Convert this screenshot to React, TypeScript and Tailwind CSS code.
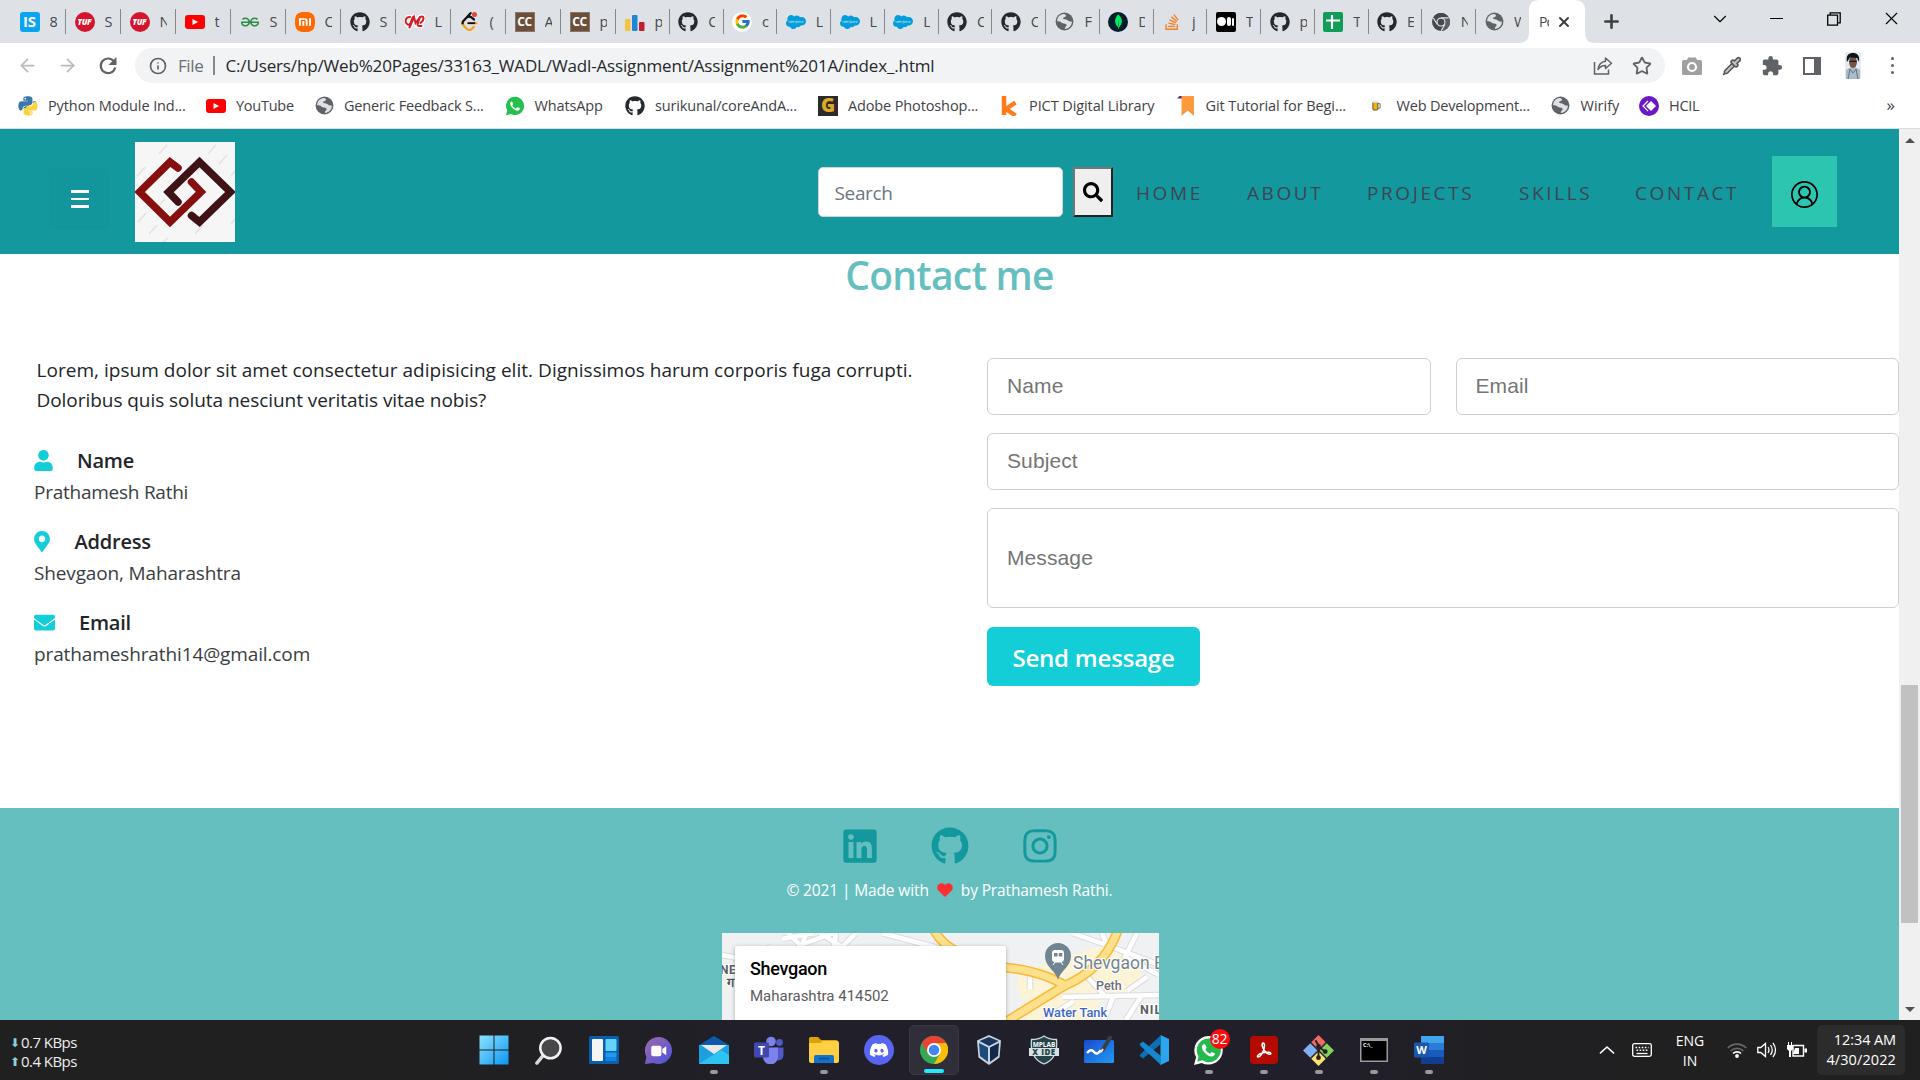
import type { ReactNode } from 'react';
import {
  FaDiscord,
  FaEnvelope,
  FaGithub,
  FaInstagram,
  FaLinkedin,
  FaMapMarkerAlt,
  FaPython,
  FaSalesforce,
  FaSearch,
  FaStackOverflow,
  FaUser,
} from 'react-icons/fa';
import { FcGoogle } from 'react-icons/fc';
import { MdExtension } from 'react-icons/md';
import { SiGeeksforgeeks, SiLeetcode, SiMongodb, SiXiaomi } from 'react-icons/si';
import { VscAccount } from 'react-icons/vsc';
import { ArrowLeft, ArrowRight, ChevronDown, ChevronUp, Info, Pipette, Plus, Star, X } from 'lucide-react';

/* ---------- small brand marks ---------- */

const Globe = () => (
  <svg viewBox="0 0 20 20" className="size-[19px]">
    <circle cx="10" cy="10" r="9.4" fill="#5f6368" />
    <path d="M9 2.2c2 .2 3 .9 2.400 2.200-.6 1.200-2.400.8-2.900 2-.4 1.200 1.600 1.400 3.200 1.600 1.800.3 2.100 1.900 3.700 2 1.300 0 2.300-.3 2.400.6-.2 3.900-3.500 7.200-7.300 7.200-.3-1.500.2-2.100 1.300-2.900 1-.8.400-2.200-1-2.500-1.900-.3-3.200-.2-4.400-1.500C5.200 9.700 3.400 9.600 2.200 9.800 2.300 5.700 5.200 2.500 9 2.200z" fill="#dfe1e5" />
  </svg>
);

const YouTube = () => (
  <span className="flex h-[14px] w-[20px] items-center justify-center rounded-[3px] bg-[#ff0000]">
    <svg viewBox="0 0 6 6" className="size-[6px]"><path d="M0.500 0l5.500 3-5.500 3z" fill="#fff" /></svg>
  </span>
);

const Tuf = () => (
  <span className="flex size-5 items-center justify-center rounded-full bg-[#d5152d] text-[8px] font-black italic leading-none tracking-[-0.2px] text-white">TUF</span>
);

const CodeChef = () => (
  <span className="flex size-5 items-center justify-center border border-[#8b7564] bg-[#6b4f3a] text-[12px] font-bold leading-none tracking-[-0.3px] text-white">CC</span>
);

const Bars = () => (
  <svg viewBox="0 0 20 20" className="size-5">
    <rect x="0" y="7" width="5.500" height="12" rx="1" fill="#f5c342" />
    <rect x="7" y="3" width="5.500" height="16" rx="1" fill="#1e88d2" />
    <rect x="14" y="10" width="5.500" height="9" rx="1" fill="#c01f2e" />
  </svg>
);

const Octocat = () => <FaGithub className="size-[20px] text-[#24292e]" />;
const Cloud = () => <FaSalesforce className="size-[20px] text-[#009edb]" />;

const WhatsApp = ({ className }: { className: string }) => (
  <svg viewBox="0 0 24 24" className={className}>
    <path d="M12.200 1A10.900 10.900 0 0 0 2.800 17.500L1 23.200l6-1.600A10.900 10.900 0 1 0 12.200 1z" fill="#25c04d" />
    <path d="M8.300 6.500c-.4-.1-1 .1-1.400.7-1.200 1.500-.8 3.500.6 5.400 2 2.900 4.600 4.600 7.200 5 1.500.1 2.700-.7 3-1.900.2-.7 0-1-.3-1.200l-2.200-1c-.4-.2-.7-.1-.9.200l-.9 1.100c-.2.3-.5.300-.8.100-1.600-.7-2.800-1.800-3.700-3.300-.2-.3 0-.5.200-.8l.6-.8c.1-.2.100-.5 0-.7l-.9-2.200c-.1-.4-.3-.6-.5-.6z" fill="#fff" />
  </svg>
);

const Chrome = ({ mono = false, className }: { mono?: boolean; className: string }) => (
  <svg viewBox="0 0 24 24" className={className}>
    <circle cx="12" cy="12" r="12" fill={mono ? '#45494e' : '#34a853'} />
    <path d="M1.600 6A12 12 0 0 1 22.400 6L12 6.300 6.800 15z" fill={mono ? '#45494e' : '#ea4335'} />
    <path d="M22.400 6A12 12 0 0 1 12 24l5.200-9L12 6.300z" fill={mono ? '#5b6066' : '#fbbc05'} />
    {mono && <path d="M12 6.400H22M6.900 15L1.800 6.600M17.200 15l-5 8.700" stroke="#dee1e6" strokeWidth="1.600" />}
    <circle cx="12" cy="12" r="6" fill={mono ? '#dee1e6' : '#fff'} />
    <circle cx="12" cy="12" r="4.500" fill={mono ? '#45494e' : '#4285f4'} />
  </svg>
);

/* ---------- tab strip ---------- */

type Tab = { icon: ReactNode; letter: string };

const wideTabs: Tab[] = [
  { icon: <span className="flex size-5 items-center justify-center rounded-[3px] bg-[#0aa5f0] text-[15px] font-bold leading-none text-white">IS</span>, letter: '8' },
  { icon: <Tuf />, letter: 'S' },
  { icon: <Tuf />, letter: 'N' },
  { icon: <YouTube />, letter: 't' },
  { icon: <SiGeeksforgeeks className="size-[18px] text-[#2f8d46]" />, letter: 'S' },
  { icon: <span className="flex size-5 items-center justify-center rounded-[6px] bg-white"><SiXiaomi className="size-5 text-[#ff6900]" /></span>, letter: 'C' },
  { icon: <Octocat />, letter: 'S' },
  {
    icon: (
      <svg viewBox="0 0 20 16" className="h-[16px] w-5">
        <path d="M5 3a4 4 0 0 0-3 7q2 2 3.500-1L8 3M4.500 13.500L9 3l1.500 6L15 3l-2.500 7.500q0 2 4 1.500M15 3q3-1.500 3.500 1 0 3-3 5" fill="none" stroke="#fff" strokeWidth="4.500" strokeLinecap="round" />
        <path d="M5 3a4 4 0 0 0-3 7q2 2 3.500-1L8 3M4.500 13.500L9 3l1.500 6L15 3l-2.500 7.500q0 2 4 1.500M15 3q3-1.500 3.500 1 0 3-3 5" fill="none" stroke="#d01f26" strokeWidth="2" strokeLinecap="round" />
      </svg>
    ),
    letter: 'L',
  },
  {
    icon: (
      <span className="relative flex size-5 items-center justify-center">
        <SiLeetcode className="size-[19px] text-[#f89f1b] [clip-path:inset(50%_0_0_0)]" />
        <SiLeetcode className="absolute size-[19px] text-[#111111] [clip-path:inset(0_20%_35%_0)]" />
        <i className="absolute right-[3px] top-0 size-[5px] rounded-full bg-[#e0453a]" />
      </span>
    ),
    letter: '(',
  },
  { icon: <CodeChef />, letter: 'A' },
  { icon: <CodeChef />, letter: 'p' },
];

const narrowTabs: Tab[] = [
  { icon: <Bars />, letter: 'p' },
  { icon: <Octocat />, letter: 'C' },
  { icon: <span className="flex size-5 items-center justify-center rounded-full bg-white"><FcGoogle className="size-[17px]" /></span>, letter: 'c' },
  { icon: <Cloud />, letter: 'L' },
  { icon: <Cloud />, letter: 'L' },
  { icon: <Cloud />, letter: 'L' },
  { icon: <Octocat />, letter: 'C' },
  { icon: <Octocat />, letter: 'C' },
  { icon: <Globe />, letter: 'F' },
  { icon: <span className="flex size-5 items-center justify-center rounded-full bg-[#001e2b]"><SiMongodb className="size-[15px] text-[#00ed64]" /></span>, letter: 'D' },
  { icon: <FaStackOverflow className="size-[18px] text-[#f48024]" />, letter: 'j' },
  {
    icon: (
      <span className="flex size-5 items-center justify-center gap-px rounded-[2px] bg-black">
        <i className="size-[9px] rounded-full bg-white" />
        <i className="h-[9px] w-[4px] rounded-full bg-white" />
        <i className="h-[8px] w-[2px] rounded-full bg-white" />
      </span>
    ),
    letter: 'T',
  },
  { icon: <Octocat />, letter: 'p' },
  { icon: <span className="flex size-5 items-center justify-center rounded-[2px] bg-[#0f9d58]"><svg viewBox="0 0 14 14" className="size-[14px]"><path d="M6 0v14M0 5.500h14" stroke="#fff" strokeWidth="2.200" /></svg></span>, letter: 'T' },
  { icon: <Octocat />, letter: 'E' },
  { icon: <Chrome mono className="size-[18px]" />, letter: 'N' },
];

const TabItem = ({ icon, letter, wide }: Tab & { wide?: boolean }) => (
  <div className={`relative flex h-full shrink-0 items-center pl-[8.500px] ${wide ? 'w-[55px]' : 'w-[53.750px]'}`}>
    <span className="flex size-5 shrink-0 items-center justify-center">{icon}</span>
    <span className="ml-[10px] w-[7px] overflow-hidden text-[14.500px] leading-5 tracking-[-0.5px] text-[#45494e]">{letter}</span>
    <i className="absolute right-0 top-[9px] h-[25px] w-px bg-[#85888d]" />
  </div>
);

const TabStrip = () => (
  <div className="flex h-[43px] shrink-0 bg-[#dee1e6] pl-[11px]">
    {wideTabs.map((t, i) => <TabItem key={i} {...t} wide />)}
    {narrowTabs.map((t, i) => <TabItem key={i} {...t} />)}
    <div className="flex h-full w-[52px] items-center pl-[9px]">
      <Globe />
      <span className="ml-[10px] w-[7px] overflow-hidden text-[14.500px] leading-5 text-[#45494e]">W</span>
    </div>
    <div className="relative flex h-full w-[56px] items-center pl-[11px]">
      <svg viewBox="0 0 76 43" className="absolute -left-[9px] top-0 h-[43px] w-[76px]">
        <path d="M0 43Q10 43 10 33V10Q10 0 20 0H56Q66 0 66 10V33Q66 43 76 43z" fill="#fff" />
      </svg>
      <span className="relative w-[10px] overflow-hidden text-[14px] leading-5 tracking-[-1px] text-[#45494e]">Po</span>
      <X className="relative ml-[7px] size-4 text-[#3c4043]" strokeWidth={3} />
    </div>
    <div className="flex h-full w-[54px] items-center justify-center">
      <Plus className="size-[21px] text-[#3c4043]" strokeWidth={3} />
    </div>
    <div className="ml-auto flex h-[37px] items-center text-black">
      <span className="flex w-[57px] justify-center"><ChevronDown className="size-[22px]" strokeWidth={1.200} /></span>
      <span className="flex w-[57px] justify-center"><i className="h-[1.500px] w-[13px] bg-black" /></span>
      <span className="flex w-[57px] justify-center">
        <svg viewBox="0 0 14 14" className="size-[14px]" fill="none" stroke="#000" strokeWidth="1.300"><path d="M.7 3.200h9.800v10H.7zM3.200 3V.8h10v10h-2.500" /></svg>
      </span>
      <span className="flex w-[58px] justify-center"><X className="size-[21px]" strokeWidth={1.300} /></span>
    </div>
  </div>
);

/* ---------- address bar ---------- */

const AddressBar = () => (
  <div className="flex h-[45px] shrink-0 items-center bg-white">
    <div className="flex w-[135px] shrink-0 items-center pl-[17px]">
      <ArrowLeft className="size-[21px] text-[#bababa]" strokeWidth={2} />
      <ArrowRight className="ml-[19px] size-[21px] text-[#bababa]" strokeWidth={2} />
      <svg viewBox="0 0 20 20" className="ml-[20px] size-[20px]">
        <path d="M16 5.500A7.300 7.300 0 1 0 17.200 11.500" fill="none" stroke="#5f6368" strokeWidth="2.200" />
        <path d="M18.500 1v8h-8z" fill="#5f6368" />
      </svg>
    </div>
    <div className="flex h-[35px] w-[1530px] shrink-0 items-center rounded-full bg-[#f1f3f4] pl-[14px]">
      <Info className="size-[18px] text-[#5f6368]" strokeWidth={2.200} />
      <span className="ml-[11px] w-[35px] text-[17px] tracking-[-0.400px] text-[#6a6e73]">File</span>
      <i className="h-[19px] w-[1.500px] bg-[#85888d]" />
      <span className="ml-[11px] whitespace-nowrap text-[17px] tracking-[-0.150px] text-[#25282c]">
        C:/Users/hp/Web%20Pages/33163_WADL/Wadl-Assignment/Assignment%201A/index_.html
      </span>
      <span className="ml-auto flex w-[72px] items-center gap-[19px]">
        <svg viewBox="0 0 20 20" className="size-[20px] shrink-0" fill="none" stroke="#5f6368" strokeWidth="1.500">
          <path d="M1.500 6v12h14v-4.500" />
          <path d="M12.500 2l6 5.200-6 5.300V9.400C9 9.300 7 10.500 5 13.500 5.500 9 8 5.800 12.500 5.200z" strokeLinejoin="round" />
        </svg>
        <Star className="size-[20px] shrink-0 text-[#5f6368]" strokeWidth={2.200} />
      </span>
    </div>
    <div className="flex shrink-0 items-center pl-[7px]">
      <span className="flex w-[40px] justify-center">
        <svg viewBox="0 0 20 18" className="h-[18px] w-5">
          <path d="M1.500 3H5l1-2.500h8L15 3h3.500Q20 3 20 4.500v12q0 1.500-1.500 1.500h-17Q0 18 0 16.500v-12Q0 3 1.500 3z" fill="#a0a0a0" />
          <circle cx="10" cy="10" r="4" fill="none" stroke="#fff" strokeWidth="2.200" />
        </svg>
      </span>
      <span className="flex w-[40px] justify-center"><Pipette className="size-[20px] fill-[#c5c5c5] text-[#55585c]" strokeWidth={2} /></span>
      <span className="flex w-[40px] justify-center"><MdExtension className="size-[22px] text-[#5f6368]" /></span>
      <span className="flex w-[40px] justify-center">
        <i className="flex h-[18px] w-[18px] justify-end border-2 border-[#5f6368]"><i className="h-full w-[5px] bg-[#5f6368]" /></i>
      </span>
      <span className="flex w-[41px] justify-center">
        <svg viewBox="0 0 16 27" className="h-[27px] w-[16px]">
          <rect width="16" height="27" rx="2" fill="#e4ecf0" />
          <path d="M1 27V18l5-3h4l5 3v9z" fill="#a9bbc6" />
          <path d="M3 27l2-10 3 4 3-4 2 10" fill="none" stroke="#5f7483" />
          <ellipse cx="8" cy="10" rx="4" ry="6" fill="#7a5244" />
          <path d="M2 10C.5 3 4 1 8 1s7 2 6 9l-2-4-7-.5z" fill="#0c1522" />
          <path d="M4.500 9.300h7" stroke="#0c1522" strokeWidth="1.200" />
        </svg>
      </span>
      <span className="flex w-[39px] flex-col items-center gap-[3.500px]">
        <i className="size-[3.500px] rounded-full bg-[#5f6368]" />
        <i className="size-[3.500px] rounded-full bg-[#5f6368]" />
        <i className="size-[3.500px] rounded-full bg-[#5f6368]" />
      </span>
    </div>
  </div>
);

/* ---------- bookmarks ---------- */

const bookmarks = [
  {
    icon: (
      <>
        <svg className="absolute size-0"><linearGradient id="py" x1="0.200" y1="0" x2="0.800" y2="1"><stop offset="0.500" stopColor="#3a76a8" /><stop offset="0.500" stopColor="#fbd341" /></linearGradient></svg>
        <FaPython className="size-[22px] fill-[url(#py)]" />
      </>
    ),
    label: 'Python Module Ind...', box: 'w-[188px] tracking-[-0.100px]',
  },
  { icon: <YouTube />, label: 'YouTube', box: 'w-[108px] tracking-[-0.250px]' },
  { icon: <Globe />, label: 'Generic Feedback S...', box: 'w-[190.500px] tracking-[-0.170px]' },
  { icon: <WhatsApp className="size-[20px]" />, label: 'WhatsApp', box: 'w-[120.500px] tracking-[-0.150px]' },
  { icon: <Octocat />, label: 'surikunal/coreAndA...', box: 'w-[193px] tracking-[-0.150px]' },
  { icon: <span className="flex size-5 items-center justify-center bg-[#2b2b2b] text-[19px] font-extrabold leading-none text-[#e0a825]">G</span>, label: 'Adobe Photoshop...', box: 'w-[181px] tracking-[-0.130px]' },
  { icon: <svg viewBox="0 0 16 20" className="h-5 w-4"><path d="M3 0v19M14.500 6.500L5 13l9.500 6.500" fill="none" stroke="#ff7a1a" strokeWidth="4.500" /></svg>, label: 'PICT Digital Library', box: 'w-[176.500px] tracking-[-0.090px]' },
  { icon: <svg viewBox="0 0 18 20" className="h-5 w-[18px]"><path d="M0 2.500L2.500 0H6v2.500z" fill="#5c2a6b" /><path d="M4.500 0H17v20l-6.200-5.500L4.500 20z" fill="#fd9a3e" /></svg>, label: 'Git Tutorial for Begi...', box: 'w-[191px] tracking-[-0.090px]' },
  { icon: <svg viewBox="0 0 10 12" className="h-[11px] w-[9px]"><rect x="1" y="2" width="5.500" height="9" rx="1" fill="#f7b500" stroke="#444" /><path d="M6.500 4H9v5H6.500" fill="none" stroke="#666" /><rect x="1" y="0.500" width="6" height="2.500" fill="#e6e6e6" /></svg>, label: 'Web Development...', box: 'w-[184px] tracking-[-0.180px]' },
  { icon: <Globe />, label: 'Wirify', box: 'w-[88.500px]' },
  {
    icon: (
      <svg viewBox="0 0 20 20" className="size-5">
        <circle cx="10" cy="10" r="10" fill="#6c16c7" />
        <path d="M12 5l5 5-5 5-5-5z" fill="#fff" />
        <path d="M9 5l-5 5 5 5" fill="none" stroke="#fff" strokeWidth="1.200" />
      </svg>
    ),
    label: 'HCIL', box: 'w-[80px] tracking-[-0.250px]',
  },
];

const Bookmarks = () => (
  <div className="flex h-[41px] shrink-0 items-center border-b border-[#d9dbdd] bg-white pb-[5px] pl-[18px] text-[14.500px] text-[#3f4246]">
    {bookmarks.map((b, i) => (
      <div key={i} className={`flex shrink-0 items-center gap-[10px] whitespace-nowrap ${b.box}`}>
        <span className="flex size-5 shrink-0 items-center justify-center">{b.icon}</span>
        {b.label}
      </div>
    ))}
    <span className="ml-auto mr-[25px] pb-[3px] text-[17px] leading-none">»</span>
  </div>
);

/* ---------- web page ---------- */

const navLinks = [
  { label: 'HOME', box: 'w-[111px]' },
  { label: 'ABOUT', box: 'w-[120px]' },
  { label: 'PROJECTS', box: 'w-[152px]' },
  { label: 'SKILLS', box: 'w-[116px]' },
  { label: 'CONTACT', box: 'w-[137px]' },
];

const Logo = () => (
  <svg viewBox="0 0 100 100" className="ml-[26px] size-[100px] bg-[#f6f6f6]">
    <path d="M24 12l8-9M73 12l8-9M2 34l8-9M84 22l8-9M3 80l8-9M14 92l8-9M60 92l8-9M22 66l8-9M62 30l8-9M74 66l8-9M28 100l5-4M96 82l4-5M96 34l4-5" stroke="#e2e2e2" strokeWidth="1.500" />
    <g fill="none" strokeWidth="7.500" strokeLinecap="round" strokeLinejoin="miter">
      <path d="M43 26L35 20 4.500 50 35 80 66 50 56.500 40" stroke="#85100f" />
      <path d="M43 60L33.500 50 64.500 20 95.500 50 64.500 80 56.500 73.500" stroke="#3f1315" />
    </g>
  </svg>
);

const NavBar = () => (
  <nav className="flex h-[125px] shrink-0 items-center bg-[#13989e]">
    <div className="ml-[49px] mt-[15px] flex h-[61px] w-[60px] flex-col justify-center gap-[5px] bg-[#12969c] pl-[22px]">
      <i className="h-[2.500px] w-[18px] bg-white" />
      <i className="h-[2.500px] w-[18px] bg-white" />
      <i className="h-[2.500px] w-[18px] bg-white" />
    </div>
    <Logo />
    <div className="ml-[583px] flex h-[50px] w-[245px] items-center rounded-[5px] border border-[#ced4da] bg-white pl-[15.500px] pt-[3px] text-[19px] tracking-[-0.350px] text-[#6c757d]">
      Search
    </div>
    <div className="ml-[10px] flex h-[50px] w-[40px] items-center justify-center border-[2.500px] border-b-[#222222] border-l-[#767676] border-r-[#222222] border-t-[#767676] bg-[#efefef]">
      <FaSearch className="size-[20px] text-black" />
    </div>
    <div className="ml-[23px] flex pt-[3px] text-[19px] tracking-[2.600px] text-[#3f4551]">
      {navLinks.map((l) => <span key={l.label} className={l.box}>{l.label}</span>)}
    </div>
    <div className="flex h-[71px] w-[65px] items-center justify-center bg-[#2bc5b0] pt-[6px]">
      <VscAccount className="size-[27px] text-black" />
    </div>
  </nav>
);

const details = [
  { icon: <FaUser className="h-[21px] w-[19px]" />, title: 'Name', value: 'Prathamesh Rathi', gap: 'gap-[24px]', track: 'tracking-[-0.250px]' },
  { icon: <FaMapMarkerAlt className="h-[21px] w-[16px]" />, title: 'Address', value: 'Shevgaon, Maharashtra', gap: 'gap-[24.500px]', track: 'tracking-[-0.150px]' },
  { icon: <FaEnvelope className="size-[21px]" />, title: 'Email', value: 'prathameshrathi14@gmail.com', gap: 'gap-[24px]', track: 'tracking-[-0.120px]' },
];

const field = "flex items-center rounded-[6px] border border-[#cfcfcf] pl-[19px] font-['Liberation_Sans'] text-[21px] tracking-[0.100px] text-[#757575]";

const Contact = () => (
  <section className="flex h-[554px] shrink-0 flex-col bg-white">
    <h2 className="h-[39px] pt-px text-center text-[39px] font-semibold leading-[39px] tracking-[-0.750px] text-[#66bfbf]">Contact me</h2>
    <div className="flex pt-[62px]">
      <div className="w-[987px] shrink-0 pl-[34px] text-[#212529]">
        <p className="pl-[2.500px] text-[19px] leading-[30px]">
          <span className="block whitespace-nowrap tracking-[0.035px]">Lorem, ipsum dolor sit amet consectetur adipisicing elit. Dignissimos harum corporis fuga corrupti.</span>
          <span className="block tracking-[-0.050px]">Doloribus quis soluta nesciunt veritatis vitae nobis?</span>
        </p>
        <div className="flex flex-col gap-[18px] pt-[30px]">
          {details.map((d) => (
            <div key={d.title}>
              <div className={`flex h-[31px] items-center text-[#13ced6] ${d.gap}`}>
                {d.icon}
                <span className="text-[20px] font-semibold tracking-[-0.200px] text-[#212529]">{d.title}</span>
              </div>
              <div className={`h-8 text-[19px] leading-8 text-[#3a3d40] ${d.track}`}>{d.value}</div>
            </div>
          ))}
        </div>
      </div>
      <form className="flex flex-1 flex-col pt-[3px]">
        <div className="grid grid-cols-2 gap-[25px]">
          <div className={`h-[57px] pb-[2px] ${field}`}>Name</div>
          <div className={`h-[57px] pb-[2px] ${field}`}>Email</div>
        </div>
        <div className={`mt-[18px] h-[57px] pb-[2px] ${field}`}>Subject</div>
        <div className={`mt-[18px] h-[100px] ${field}`}>Message</div>
        <button type="button" className="mt-[19px] flex h-[59px] w-[213px] items-center justify-center whitespace-nowrap rounded-[6px] bg-[#13ced6] pt-[3px] text-[24px] font-semibold tracking-[-0.200px] text-white">
          Send message
        </button>
      </form>
    </div>
  </section>
);

const MapView = () => (
  <div className="relative h-[87px] w-[437px] overflow-hidden bg-[#f0f1f3]">
    <svg viewBox="0 0 437 87" className="h-[87px] w-[437px] font-['Roboto']">
      <path d="M294 52l6-14 30-10 44-14 10-2 30 8 6 24-12 22-30 2-8 22h-70l10-16-10-8z" fill="#fdf4d7" />
      <g fill="none" stroke="#d9dce0" strokeWidth="6.500">
        <path d="M60 6l32-6M66 0l12 12 34-12M84 0l-4 14M98 0l22 14 14-14M114 0l-2 14M26 22l24-8M160 0l60 16M0 22l30 6M350 0l40 14 47 18M380 0l6 14M415 0l-12 24 34 18M340 64l97 -2M352 68l-30 19M392 62l-10 25M420 62l-16 25M362 40l20 22M308 42v14M425 44l-20 14" />
      </g>
      <g fill="none" stroke="#fff" strokeWidth="4.500">
        <path d="M60 6l32-6M66 0l12 12 34-12M84 0l-4 14M98 0l22 14 14-14M114 0l-2 14M26 22l24-8M160 0l60 16M0 22l30 6M350 0l40 14 47 18M380 0l6 14M415 0l-12 24 34 18M340 64l97 -2M352 68l-30 19M392 62l-10 25M420 62l-16 25M362 40l20 22M308 42v14M425 44l-20 14" />
      </g>
      <g fill="none" stroke="#f9b935" strokeWidth="10">
        <path d="M212 -3Q220 12 238 20M280 34Q320 38 342 52M396 -3Q382 36 342 53L282 90" />
      </g>
      <g fill="none" stroke="#fde08c" strokeWidth="7">
        <path d="M212 -3Q220 12 238 20M280 34Q320 38 342 52M396 -3Q382 36 342 53L282 90" />
      </g>
      <path d="M336 47c-2-9-13-13-13-24a13 13 0 0 1 26 0c0 11-11 15-13 24z" fill="#6f8692" />
      <rect x="330" y="17" width="12" height="12" rx="3" fill="#fff" />
      <path d="M332 20h3.500v3.500H332zM336.800 20h3.500v3.500h-3.500z" fill="#6f8692" />
      <path d="M331 32l2-3h6l2 3" stroke="#fff" fill="none" />
      <g stroke="#fff" strokeWidth="2" paintOrder="stroke" strokeLinejoin="round">
        <text x="351" y="36" fontSize="17.500" fill="#71858f">Shevgaon B</text>
        <text x="374" y="57" fontSize="12.500" fontWeight="500" fill="#6c7076">Peth</text>
        <text x="321" y="83.500" fontSize="12.800" fontWeight="500" fill="#3b66c4">Water Tank</text>
        <text x="418" y="81" fontSize="12.500" fontWeight="700" fill="#5b5e62" letterSpacing="1">NIL</text>
        <text x="-2" y="41" fontSize="12" fontWeight="700" fill="#5b5e62" letterSpacing="0.500">NE</text>
        <text x="5" y="54" fontSize="13" fontWeight="700" fill="#505357">ग</text>
      </g>
    </svg>
    <div className="absolute left-[13px] top-[13px] h-[90px] w-[271px] rounded-[2px] bg-white pl-[15px] pt-[13px] font-['Roboto'] shadow-[0_1px_4px_rgba(0,0,0,0.300)]">
      <div className="h-[20px] text-[18px] font-medium leading-5 tracking-[-0.300px] text-black">Shevgaon</div>
      <div className="mt-[7px] text-[15px] leading-5 text-[#5b5b5b]">Maharashtra 414502</div>
    </div>
  </div>
);

const Footer = () => (
  <footer className="flex flex-1 flex-col items-center overflow-hidden bg-[#66bfbf]">
    <div className="mt-[18px] flex h-[40px] items-center gap-[52px] text-[#13989e]">
      <FaLinkedin className="size-[38px]" />
      <FaGithub className="size-[38px]" />
      <FaInstagram className="size-[38px]" />
    </div>
    <p className="mt-[13px] flex h-[22px] items-center whitespace-nowrap text-[15.500px] leading-[22px] tracking-[-0.130px] text-white">
      © 2021 | Made with
      <svg viewBox="0 0 16 14" className="mx-[8px] h-[14px] w-[16px]"><path d="M8 14L1.200 7.400A4.200 4.200 0 0 1 8 1.800a4.200 4.200 0 0 1 6.800 5.600z" fill="#fb3030" /></svg>
      by Prathamesh Rathi.
    </p>
    <div className="mr-[18px] mt-[32px]"><MapView /></div>
  </footer>
);

const ScrollBar = () => (
  <div className="flex h-full w-[21px] shrink-0 flex-col items-center bg-[#f0f0f0]">
    <i className="mt-[9px] h-0 w-0 border-x-[5px] border-b-[5px] border-x-transparent border-b-[#505050]" />
    <i className="mt-[542px] h-[238px] w-[17px] bg-[#c1c1c1]" />
    <i className="mt-[84px] h-0 w-0 border-x-[5px] border-t-[5px] border-x-transparent border-t-[#505050]" />
  </div>
);

/* ---------- taskbar ---------- */

const big = 'h-[28px] w-[30px]';

const apps: { icon: ReactNode; open?: boolean; active?: boolean; badge?: string }[] = [
  { icon: <svg viewBox="0 0 30 30" className="size-[30px]"><linearGradient id="win" x1="0" y1="0" x2="1" y2="1"><stop stopColor="#8be4fc" /><stop offset="1" stopColor="#0c95f5" /></linearGradient><path d="M.5.5h14v14H.5zM15.500.5h14v14h-14zM.5 15.500h14v14H.5zM15.500 15.500h14v14h-14z" fill="url(#win)" /></svg> },
  { icon: <svg viewBox="0 0 30 30" className="size-[29px]"><path d="M9.500 20L3 28" stroke="#d8d8d8" strokeWidth="3.500" strokeLinecap="round" /><circle cx="17" cy="12.500" r="10.500" fill="#48484b" stroke="#f2f2f2" strokeWidth="2.600" /></svg> },
  { icon: <svg viewBox="0 0 30 28" className={big}><rect width="30" height="28" rx="1.500" fill="#0c5ea8" /><rect x="3" y="3" width="11" height="22" rx="1" fill="#f5f5f5" /><rect x="16.500" y="3" width="11" height="12" rx="1" fill="#62d3fb" /><rect x="16.500" y="16.500" width="11" height="4.500" fill="#1d9bf0" /><rect x="16.500" y="21" width="11" height="4" fill="#0f83e2" /></svg> },
  { icon: <svg viewBox="0 0 30 30" className="size-[29px]"><linearGradient id="chat" x1="0" y1="0" x2="1" y2="1"><stop stopColor="#a06aa8" /><stop offset="1" stopColor="#4a52dc" /></linearGradient><path d="M15 1a14 14 0 1 1-5.500 26.900L1 29l1.500-7.500A14 14 0 0 1 15 1z" fill="url(#chat)" /><rect x="7.500" y="10" width="10.500" height="11" rx="2" fill="#fff" /><path d="M19 13.500l4-3v9.500l-4-3z" fill="#fff" /></svg> },
  { icon: <svg viewBox="0 0 30 28" className={big}><path d="M0 9L15 0l15 9v5H0z" fill="#0a5bab" /><path d="M0 9h30v19H0z" fill="#1d9fe2" /><path d="M0 28L22 14l8 5v9z" fill="#2fc3f2" /><path d="M2 9h26L15 18z" fill="#e9e9e9" /></svg>, open: true },
  { icon: <svg viewBox="0 0 30 28" className={big}><circle cx="17" cy="5.500" r="4.800" fill="#7b83eb" /><circle cx="25.500" cy="6.500" r="3.400" fill="#5059c9" /><path d="M20 11.500h9.500v8a5 5 0 0 1-7 4.500z" fill="#5059c9" /><path d="M9 11.500h15V21a7.500 7.500 0 0 1-15 0z" fill="#7b83eb" /><rect x="0" y="6.500" width="15" height="15" rx="1.500" fill="#4048b0" /><text x="7.500" y="18.500" textAnchor="middle" fontSize="12" fontWeight="700" fill="#fff">T</text></svg> },
  { icon: <svg viewBox="0 0 30 28" className={big}><path d="M0 2.500Q0 1 1.500 1H9l3 3h15q2 0 2 2v6H0z" fill="#e0a106" /><path d="M0 7h11l3-2h14q2 0 2 2v18q0 2-2 2H2q-2 0-2-2z" fill="#fdcf45" /><path d="M5 27v-6q0-2 2-2h16q2 0 2 2v6z" fill="#1173ca" /><path d="M10 22.500h10" stroke="#0a4f96" strokeWidth="1.800" /></svg>, open: true },
  { icon: <span className="flex size-[30px] items-center justify-center rounded-full bg-[#5865f2]"><FaDiscord className="size-[20px] text-white" /></span> },
  { icon: <Chrome className="size-[28px]" />, open: true, active: true },
  { icon: <svg viewBox="0 0 26 30" className="h-[30px] w-[26px]"><path d="M13 0l12 5.500-1.500 17L13 30 2.500 22.500 1 5.500z" fill="#c7d4e2" /><path d="M13 2l9.500 4L13 11 3.500 6z" fill="#17375e" /><path d="M3 8l9 4.500V27l-8-6z" fill="#1f4a7c" /><path d="M23 8l-9 4.500V27l8-6z" fill="#12294a" /></svg> },
  { icon: <svg viewBox="0 0 30 30" className="size-[30px]"><path d="M15 1c4 3 8 3.500 12.500 3.500 1 10-1 20-12.500 24.500C3.500 24.500 1.500 14.500 2.500 4.500 7 4.500 11 4 15 1z" fill="#24434a" stroke="#cfdcdc" strokeWidth="1.300" /><text x="15" y="11.500" textAnchor="middle" fontSize="6.500" fontWeight="700" fill="#fff">MPLAB</text><rect x="0" y="13" width="30" height="8" fill="#d6e2e2" /><text x="15" y="20" textAnchor="middle" fontSize="8" fontWeight="800" fill="#24434a" letterSpacing="0.500">X IDE</text></svg> },
  { icon: <svg viewBox="0 0 30 28" className={big}><linearGradient id="wb" x1="0" y1="0" x2="1" y2="1"><stop stopColor="#1b49cf" /><stop offset="1" stopColor="#1f9cf5" /></linearGradient><rect y="4" width="30" height="23" rx="1.500" fill="url(#wb)" /><path d="M3 17q4-5 7-1t7-2" stroke="#fff" strokeWidth="2.500" fill="none" /><path d="M18 15L27 0" stroke="#3a3f46" strokeWidth="4" /><path d="M17 16l2-3" stroke="#e8e8e8" strokeWidth="2" /></svg> },
  { icon: <svg viewBox="0 0 30 30" className="size-[30px]"><path d="M21.500 0L30 4v22l-8.500 4z" fill="#2aa5ee" /><path d="M22 0L1.500 19l-.9 2L4 23.500 22 9z" fill="#0d6db5" /><path d="M22 30L1.500 11l-.9-2L4 6.500 22 21z" fill="#1787cf" /></svg> },
  { icon: <svg viewBox="0 0 28 28" className="size-[29px]"><path d="M14 0A13.800 13.800 0 0 0 2 20.500L0 28l7.500-2A13.800 13.800 0 1 0 14 0z" fill="#fff" /><path d="M14 2.300a11.500 11.500 0 0 0-9.600 17.500l-1.200 5 5-1.300A11.500 11.500 0 1 0 14 2.300z" fill="#26b84d" /><path d="M9.500 8c-.8 0-2 1.300-1.800 3 .3 3 4.300 8.300 9.300 8.800 2 0 3.300-1.300 3.300-2.800l-3.200-1.600-1.500 1.700c-2.200-.8-3.700-2.200-4.600-4.200l1.200-1.500L10.700 8z" fill="#fff" /></svg>, open: true, badge: '82' },
  { icon: <span className="flex size-[28px] items-center justify-center rounded-[4px] bg-[#b30b00]"><svg viewBox="0 0 20 20" className="size-[18px]" fill="none" stroke="#fff" strokeWidth="1.700"><path d="M10 10c-2-3-3-7.500-1-7.800 2.200 0 1.800 5 .4 8.300-1.400 3.500-4 7-6 7.200-1.800-.3 0-3 3.600-4.100 3-1 6.500-1.400 9-1 2.300.5 2 2.300 0 2-2-.2-4.300-2.100-6-4.600z" /></svg></span>, open: true },
  { icon: <svg viewBox="0 0 30 30" className="size-[31px]"><path d="M15 0l7 7-7 7-7-7z" fill="#f06a6a" /><path d="M7 8l7 7-7 7-7-7z" fill="#7fb0f5" /><path d="M23 8l7 7-7 7-7-7z" fill="#84d162" /><path d="M15 16l7 7-7 7-7-7z" fill="#fbe074" /><path d="M12 5l3 5v13M15 11l6 5" stroke="#26231f" strokeWidth="1.800" fill="none" /><circle cx="15" cy="11" r="2.300" fill="#26231f" /><circle cx="15" cy="22" r="2.300" fill="#26231f" /><circle cx="21.500" cy="16" r="2.300" fill="#26231f" /></svg>, open: true },
  { icon: <svg viewBox="0 0 28 24" className="h-[24px] w-[28px]"><rect width="28" height="24" fill="#9b9b9b" /><rect x="1.500" y="3" width="25" height="19.500" fill="#000" /><text x="3" y="9" fontSize="5.500" fontWeight="700" fill="#fff">C:\_</text></svg>, open: true },
  { icon: <svg viewBox="0 0 30 28" className={big}><rect x="7" y="0" width="23" height="28" rx="1.500" fill="#2b7cd3" /><path d="M7 0h23v7H7z" fill="#41a5ee" /><path d="M7 14h23v7H7z" fill="#185abd" /><path d="M7 21h23v7H7z" fill="#103f91" /><rect x="0" y="6.500" width="15" height="15" rx="1.500" fill="#1a55b0" /><text x="7.500" y="18" textAnchor="middle" fontSize="11" fontWeight="700" fill="#fff">W</text></svg>, open: true },
];

const TaskBar = () => (
  <div className="flex h-[60px] shrink-0 items-center bg-[linear-gradient(90deg,#202020_0%,#202021_22%,#211f2a_45%,#211f2a_68%,#202022_80%,#202020_100%)] text-white">
    <div className="w-[466px] shrink-0 pl-[10px] pt-[4px] text-[15px] font-medium leading-[19.500px] tracking-[-0.550px] text-[#eeeeee]">
      <div className="flex items-center"><span className="w-[11px] text-[12px] text-[#8fd0d8]">⬇</span>0.7 KBps</div>
      <div className="flex items-center"><span className="w-[11px] text-[12px] text-[#8fd0d8]">⬆</span>0.4 KBps</div>
    </div>
    {apps.map((a, i) => (
      <div key={i} className="flex h-full w-[55px] shrink-0 items-center justify-center">
        <div className={`relative flex h-[50px] w-[50px] items-center justify-center rounded-[5px] ${a.active ? 'border border-[#3a3944] bg-[#302f39]' : ''}`}>
          {a.icon}
          {a.open && <i className={`absolute bottom-px h-[4px] rounded-full ${a.active ? 'w-[20px] bg-[#26e9fb]' : 'w-[8px] bg-[#99989c]'}`} />}
          {a.badge && <b className="absolute right-[4px] top-[4px] flex size-[20px] items-center justify-center rounded-full bg-[#f90d0d] text-[14px] font-normal leading-none tracking-[-0.3px]">{a.badge}</b>}
        </div>
      </div>
    ))}
    <div className="ml-auto mr-[15px] flex h-full items-center text-[14.500px] leading-5">
      <ChevronUp className="size-[24px] scale-x-110" strokeWidth={1.500} />
      <svg viewBox="0 0 20 14" className="ml-[13px] h-[14px] w-[20px]" fill="none" stroke="#fff"><rect x=".7" y=".7" width="18.600" height="12.600" rx="1.800" strokeWidth="1.300" /><path d="M3.500 4.500h13M4.500 7.300h11" strokeWidth="1.500" strokeDasharray="1.600 1.500" /><path d="M4.500 10.500h11" strokeWidth="1.300" /></svg>
      <div className="ml-[19px] w-[38px] pt-px text-center text-[14px]">ENG<br />IN</div>
      <svg viewBox="0 0 20 16" className="ml-[18px] h-[16px] w-[20px]" fill="none" strokeWidth="1.700"><path d="M.8 6a13 13 0 0 1 18.400 0M3.600 9a9 9 0 0 1 12.800 0" stroke="#66666a" /><path d="M6 11.500a5.700 5.700 0 0 1 8 0" stroke="#fff" /><circle cx="10" cy="14" r="1.900" fill="#fff" /></svg>
      <svg viewBox="0 0 20 18" className="ml-[10px] h-[18px] w-[20px]" fill="none" stroke="#fff" strokeWidth="1.300"><path d="M.8 6.500h3L8.500 2.500v13L3.800 11.500h-3z" /><path d="M11 6q2 3 0 6M13.500 4q3.500 5 0 10M16 1.800q5 7.200 0 14.400" /></svg>
      <svg viewBox="0 0 20 16" className="ml-[10px] h-[16px] w-[20px]"><path d="M6 3.500h10.500V14H6z" fill="none" stroke="#fff" strokeWidth="1.400" /><path d="M8 6h4v6H6zM17.500 6.500H20v4h-2.500zM0 3h6v4L4 9v6H2V9L0 7zM1 0h1v3H1zM4 0h1v3H4z" fill="#fff" /></svg>
      <div className="ml-[10px] flex h-[50px] w-[88px] flex-col items-end justify-center rounded-[5px] bg-[#2c2c2c] pr-[9px]">
        <span className="tracking-[-0.100px]">12:34 AM</span>
        <span className="tracking-[0.100px]">4/30/2022</span>
      </div>
    </div>
  </div>
);

export default function App() {
  return (
    <div className="flex h-[1080px] w-[1920px] flex-col overflow-hidden bg-white font-['Open_Sans','Noto_Sans',sans-serif]">
      <TabStrip />
      <AddressBar />
      <Bookmarks />
      <div className="flex h-[891px] shrink-0">
        <main className="flex h-full w-[1899px] shrink-0 flex-col">
          <NavBar />
          <Contact />
          <Footer />
        </main>
        <ScrollBar />
      </div>
      <TaskBar />
    </div>
  );
}
